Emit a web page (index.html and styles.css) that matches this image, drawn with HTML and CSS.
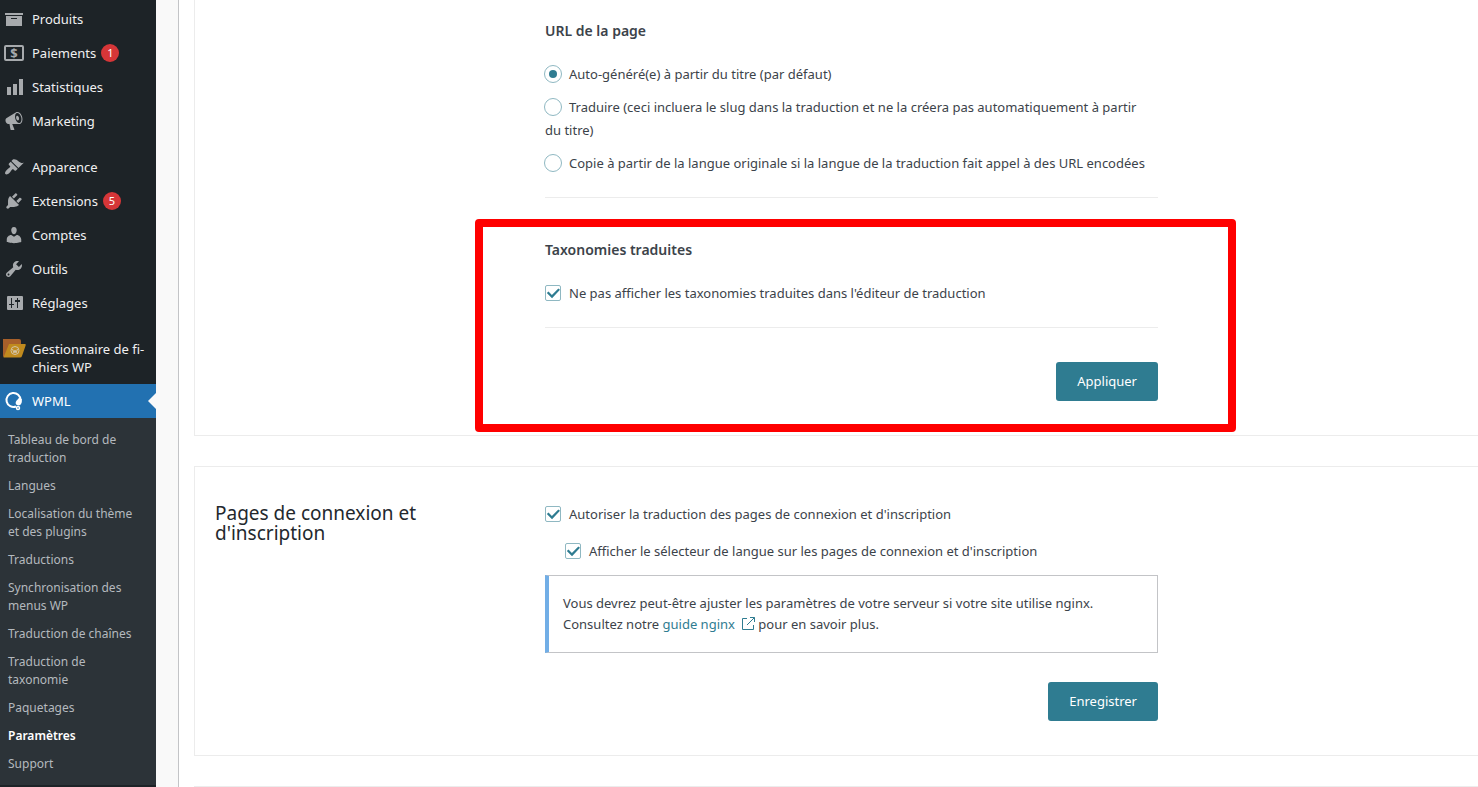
FILE: index.html
```html
<!DOCTYPE html>
<html lang="fr">
<head>
<meta charset="utf-8">
<title>WPML – Paramètres</title>
<link rel="stylesheet" href="styles.css">
</head>
<body>
<div class="layout">
  <nav class="sidebar" aria-label="Menu principal">
    <ul class="menu">
      <li><a class="menu-item" href="#"><svg class="icon" viewBox="0 0 20 20"><path d="M19 4v2H1V4h18zM2 7h16v10H2V7zm11 3V9H7v1h6z"/></svg>Produits</a></li>
      <li><a class="menu-item" href="#"><svg class="icon" viewBox="0 0 20 20"><rect x="1" y="3" width="18" height="14" rx="1" fill="none" stroke="currentColor" stroke-width="2"/><text class="coin" x="10" y="15" text-anchor="middle">$</text></svg>Paiements<span class="badge">1</span></a></li>
      <li><a class="menu-item" href="#"><svg class="icon" viewBox="0 0 20 20"><path d="M19 18V2h-4v16h4zm-6 0V7H9v11h4zm-6 0v-8H3v8h4z"/></svg>Statistiques</a></li>
      <li><a class="menu-item" href="#"><svg class="icon" viewBox="0 0 20 20"><path fill-rule="evenodd" d="M18.15 5.94c.46 1.62.38 3.22-.02 4.48-.42 1.28-1.26 2.18-2.3 2.48-.16.06-.26.06-.4.06-.06.02-.12.02-.18.02-.06.02-.14.02-.22.02h-6.8l2.22 5.5c.02.14-.06.26-.14.34-.08.1-.24.16-.34.16H6.95c-.1 0-.26-.06-.34-.16-.08-.08-.16-.2-.14-.34l-1-5.5H4.25l-.02-.02c-.5.06-1.08-.18-1.54-.62s-.88-1.08-1.06-1.88c-.24-.8-.2-1.56-.02-2.2.18-.62.58-1.08 1.06-1.3l.02-.02 9-5.4c.1-.06.18-.1.24-.16.06-.04.14-.08.24-.12.16-.08.28-.12.5-.18 1.04-.3 2.24.1 3.22.98s1.84 2.24 2.26 3.86zm-2.58 5.98h-.02c.4-.1.74-.34 1.04-.7.58-.7.86-1.76.86-3.04 0-.64-.1-1.3-.28-1.98-.34-1.36-1.02-2.5-1.78-3.24s-1.68-1.1-2.46-.88c-.82.22-1.4.96-1.7 2-.32 1.04-.28 2.36.06 3.72.38 1.36 1 2.5 1.8 3.24.78.74 1.62 1.1 2.48.88zm-2.54-7.08c.22-.04.42-.02.62.04.38.16.76.48 1.02 1s.42 1.2.42 1.78c0 .3-.04.56-.12.8-.18.48-.44.84-.86.94-.34.1-.8-.06-1.14-.4s-.64-.86-.78-1.5c-.18-.62-.12-1.24.02-1.72s.48-.84.82-.94z"/></svg>Marketing</a></li>
      <li class="menu-group"><a class="menu-item" href="#"><svg class="icon" viewBox="0 0 20 20"><path d="M14.48 11.06L7.41 3.99l1.5-1.5c.5-.56 2.3-.47 3.51.32 1.21.8 1.43 1.28 2.91 2.1 1.18.64 2.45 1.26 4.45.85zm-.71.71L6.7 4.7 4.93 6.47c-.39.39-.39 1.02 0 1.41l1.06 1.06c.39.39.39 1.03 0 1.42-.6.6-1.43 1.11-2.21 1.69-.35.26-.7.53-1.01.84C1.43 14.23.4 16.08 1.4 17.07c.99 1 2.84-.03 4.18-1.36.31-.31.58-.66.85-1.02.57-.78 1.08-1.61 1.69-2.21.39-.39 1.02-.39 1.41 0l1.06 1.06c.39.39 1.02.39 1.41 0z"/></svg>Apparence</a></li>
      <li><a class="menu-item" href="#"><svg class="icon" viewBox="0 0 20 20"><path d="M13.11 4.36L9.87 7.6 8 5.73l3.24-3.24c.35-.34 1.05-.2 1.56.32.52.51.66 1.21.31 1.55zm-8 1.77l.91-1.12 9.01 9.01-1.19.84c-.71.71-2.63 1.16-3.82 1.16H6.14L4.9 17.26c-.59.59-1.54.59-2.12 0-.59-.58-.59-1.53 0-2.12l1.24-1.24v-3.88c0-1.13.4-3.19 1.09-3.89zm7.26 3.97l3.24-3.24c.34-.35 1.04-.21 1.55.31.52.51.66 1.21.31 1.55l-3.24 3.25z"/></svg>Extensions<span class="badge">5</span></a></li>
      <li><a class="menu-item" href="#"><svg class="icon" viewBox="0 0 20 20"><path d="M10 9.25c-2.27 0-2.73-3.44-2.73-3.44C7 4.02 7.82 2 9.97 2c2.16 0 2.98 2.02 2.71 3.81 0 0-.41 3.44-2.68 3.44zm0 2.57L12.72 10c2.39 0 4.52 2.33 4.52 4.53v2.49s-3.65 1.13-7.24 1.13c-3.65 0-7.24-1.13-7.24-1.13v-2.49c0-2.25 1.94-4.48 4.47-4.48z"/></svg>Comptes</a></li>
      <li><a class="menu-item" href="#"><svg class="icon" viewBox="0 0 20 20"><path fill-rule="evenodd" d="M16.68 9.77c-1.34 1.34-3.3 1.67-4.95.99l-5.41 6.52c-.99.99-2.59.99-3.58 0s-.99-2.59 0-3.57l6.52-5.42c-.68-1.65-.35-3.61.99-4.95 1.28-1.28 3.12-1.62 4.72-1.06l-2.89 2.89 2.82 2.82 2.86-2.87c.53 1.58.18 3.39-1.08 4.65zM3.81 16.21c.4.39 1.04.39 1.43 0 .4-.4.4-1.04 0-1.43-.39-.4-1.03-.4-1.43 0-.39.39-.39 1.03 0 1.43z"/></svg>Outils</a></li>
      <li><a class="menu-item" href="#"><svg class="icon" viewBox="0 0 20 20"><rect x="3" y="3" width="16" height="14" rx="1"/><path class="cut" d="M7 5h1v6h2v1H8v3H7v-3H5v-1h2zM13 5h1v2h2v2h-2v6h-1V9h-2V7h2z"/></svg>Réglages</a></li>
      <li class="menu-group"><a class="menu-item" href="#"><svg class="icon icon-folder" viewBox="0 0 24 20"><path fill="#a8602a" d="M1 0h16q2 0 2 2v4L7 18H2q-1 0-1-1z"/><path fill="#c08a1e" d="M7 5h16q1 0 .7 1.200L20 17q-.4 1.500-2 1.500H1.500z"/><circle cx="13" cy="11.500" r="4" fill="none" stroke="#d3c3a4"/><path fill="none" stroke="#d3c3a4" d="M10.500 10l1.500 4 1-3 1 3 1.500-4"/></svg><span>Gestionnaire de fi-<br>chiers WP</span></a></li>
      <li>
        <a class="menu-item current" href="#"><svg class="icon" viewBox="0 0 20 20"><path fill="none" stroke="currentColor" stroke-width="2" d="M12 15.500A7 7 0 1 1 16.500 9"/><path d="M17.800 8c.4 4-.6 6.200-3.300 6.400-2.500 0-3.200-1.800-2.700-3.400.5-2 2.700-2.500 3.200-4.500z"/><circle cx="14" cy="17" r="1.500" fill="none" stroke="currentColor" stroke-width="1.500"/></svg>WPML</a>
        <ul class="submenu">
          <li><a href="#">Tableau de bord de traduction</a></li>
          <li><a href="#">Langues</a></li>
          <li><a href="#">Localisation du thème et des plugins</a></li>
          <li><a href="#">Traductions</a></li>
          <li><a href="#">Synchronisation des menus WP</a></li>
          <li><a href="#">Traduction de chaînes</a></li>
          <li><a href="#">Traduction de taxonomie</a></li>
          <li><a href="#">Paquetages</a></li>
          <li><a class="active" href="#">Paramètres</a></li>
          <li><a href="#">Support</a></li>
        </ul>
      </li>
    </ul>
  </nav>
  <main class="content">
    <section class="card card-continued">
      <div class="card-body">
        <fieldset class="group">
          <legend class="group-title">URL de la page</legend>
          <label class="option"><input class="radio" type="radio" name="slug" checked>Auto-généré(e) à partir du titre (par défaut)</label>
          <label class="option"><input class="radio" type="radio" name="slug">Traduire (ceci incluera le slug dans la traduction et ne la créera pas automatiquement à partir du titre)</label>
          <label class="option"><input class="radio" type="radio" name="slug">Copie à partir de la langue originale si la langue de la traduction fait appel à des URL encodées</label>
        </fieldset>
        <div class="highlight">
          <fieldset class="group">
            <legend class="group-title">Taxonomies traduites</legend>
            <label class="option"><input class="check" type="checkbox" checked>Ne pas afficher les taxonomies traduites dans l'éditeur de traduction</label>
          </fieldset>
          <div class="actions actions-wide"><button class="button" type="button">Appliquer</button></div>
        </div>
      </div>
    </section>
    <section class="card card-login">
      <h2 class="card-title">Pages de connexion et d'inscription</h2>
      <div class="card-body">
        <div class="login-options">
          <label class="option"><input class="check" type="checkbox" checked>Autoriser la traduction des pages de connexion et d'inscription</label>
          <label class="option option-nested"><input class="check" type="checkbox" checked>Afficher le sélecteur de langue sur les pages de connexion et d'inscription</label>
        </div>
        <p class="notice">Vous devrez peut-être ajuster les paramètres de votre serveur si votre site utilise nginx. Consultez notre <a class="link" href="#">guide nginx<svg class="external" viewBox="0 0 13 13"><path d="M5 1.500H.5v11h11V8M8 .5h4.500V5M12.500.5L5 8"/></svg></a> pour en savoir plus.</p>
        <div class="actions"><button class="button" type="button">Enregistrer</button></div>
      </div>
    </section>
    <section class="card"></section>
  </main>
</div>
</body>
</html>
```

FILE: styles.css
```css
* {
  box-sizing: border-box;
}

body {
  margin: 0;
  background: #f9f9f9;
  color: #3c434a;
  font: 13px/23px "Noto Sans", "Open Sans", sans-serif;
}

.layout {
  display: flex;
  height: 100vh;
  overflow: hidden;
}

/* Sidebar */
.sidebar {
  flex: 0 0 156px;
  padding-top: 2px;
  background: #1d2327;
}

.menu,
.submenu {
  margin: 0;
  padding: 0;
  list-style: none;
}

.menu-group {
  margin-top: 12px;
}

.menu-item {
  position: relative;
  display: flex;
  gap: 8px;
  padding: 8px 0 8px 4px;
  color: #f0f0f1;
  line-height: 18px;
  text-decoration: none;
  white-space: nowrap;
}

.icon {
  flex: none;
  width: 20px;
  height: 20px;
  margin: -1px 0;
  color: #a7aaad;
  fill: currentColor;
}

.icon-folder {
  width: 24px;
  margin-right: -2px;
  margin-left: -2px;
}

.coin {
  font-size: 13px;
  font-weight: 700;
}

.cut {
  fill: #1d2327;
}

.badge {
  width: 18px;
  height: 18px;
  margin-left: -3px;
  border-radius: 9px;
  background: #d63638;
  color: #fff;
  font-size: 11px;
  text-align: center;
}

.current {
  background: #2271b1;
  color: #fff;
}

.current .icon {
  color: #fff;
}

.current::after {
  content: "";
  position: absolute;
  top: 9px;
  right: 0;
  border: 8px solid transparent;
  border-right-color: #f9f9f9;
  border-left: 0;
}

.submenu {
  padding: 8px 0 7px;
  background: #2c3338;
}

.submenu a {
  display: block;
  padding: 5px 12px 5px 8px;
  color: #b4b9be;
  font-size: 12px;
  line-height: 18px;
  text-decoration: none;
}

.submenu .active {
  color: #fff;
  font-weight: 600;
}

/* Content */
.content {
  flex: 1;
  display: flex;
  flex-direction: column;
  gap: 30px;
  margin-left: 22px;
  padding-left: 15px;
  border-left: 1px solid #c3c4c7;
  background: #fff;
}

.card {
  display: grid;
  grid-template-columns: 330px minmax(0, 613px);
  flex: none;
  padding: 36px 20px 34px;
  border: 1px solid #ececec;
  border-right: 0;
}

.card-continued {
  padding-top: 21px;
  border-top: 0;
}

.card-body {
  grid-column: 2;
}

.card-title {
  max-width: 230px;
  margin: 0;
  color: #23282d;
  font-size: 19px;
  font-weight: 400;
  line-height: 20px;
}

.group {
  display: flex;
  flex-direction: column;
  gap: 10px;
  margin: 0;
  padding: 0 0 22px;
  border: 0;
  border-bottom: 1px solid #ececec;
}

.group-title {
  margin-bottom: 22px;
  padding: 0;
  font-size: 14px;
  font-weight: 600;
  line-height: 20px;
}

.option {
  display: block;
  padding-right: 8px;
}

.option-nested {
  margin-left: 20px;
}

.radio,
.check {
  appearance: none;
  display: inline-block;
  overflow: hidden;
  width: 16px;
  height: 16px;
  margin: 0 8px 0 0;
  border: 1px solid #8fb8c2;
  border-radius: 2px;
  background: #fff;
  vertical-align: -3px;
}

.radio {
  width: 18px;
  height: 18px;
  margin: -1px 7px -1px -1px;
  border-radius: 50%;
}

.radio:checked::before {
  content: "";
  display: block;
  width: 8px;
  height: 8px;
  margin: 4px;
  border-radius: 50%;
  background: #2f7c91;
}

.check:checked::before {
  content: "";
  display: block;
  width: 14px;
  height: 12px;
  margin: 1px 0;
  background: #2f7c91;
  clip-path: polygon(6% 50%, 18% 38%, 42% 66%, 88% 12%, 100% 22%, 43% 94%);
}

.highlight {
  position: relative;
  padding-top: 42px;
}

.highlight::after {
  content: "";
  position: absolute;
  inset: 21px -78px -31px -70px;
  border: 8px solid #f00;
  border-radius: 4px;
  pointer-events: none;
}

.login-options {
  display: flex;
  flex-direction: column;
  gap: 14px;
}

.notice {
  margin: 12px 0 0;
  padding: 17px 14px;
  border: 1px solid #c3c4c7;
  border-left: 4px solid #72aee6;
  line-height: 21px;
}

.link {
  color: #2f7c91;
  text-decoration: none;
}

.external {
  width: 13px;
  height: 13px;
  margin-left: 7px;
  fill: none;
  stroke: currentColor;
  vertical-align: -1px;
}

.actions {
  display: flex;
  justify-content: flex-end;
  margin-top: 29px;
}

.actions-wide {
  margin-top: 34px;
}

.button {
  padding: 10px 21px;
  border: 0;
  border-radius: 3px;
  background: #2f7c91;
  color: #fff;
  font: 13px/19px "Noto Sans", "Open Sans", sans-serif;
}
```
